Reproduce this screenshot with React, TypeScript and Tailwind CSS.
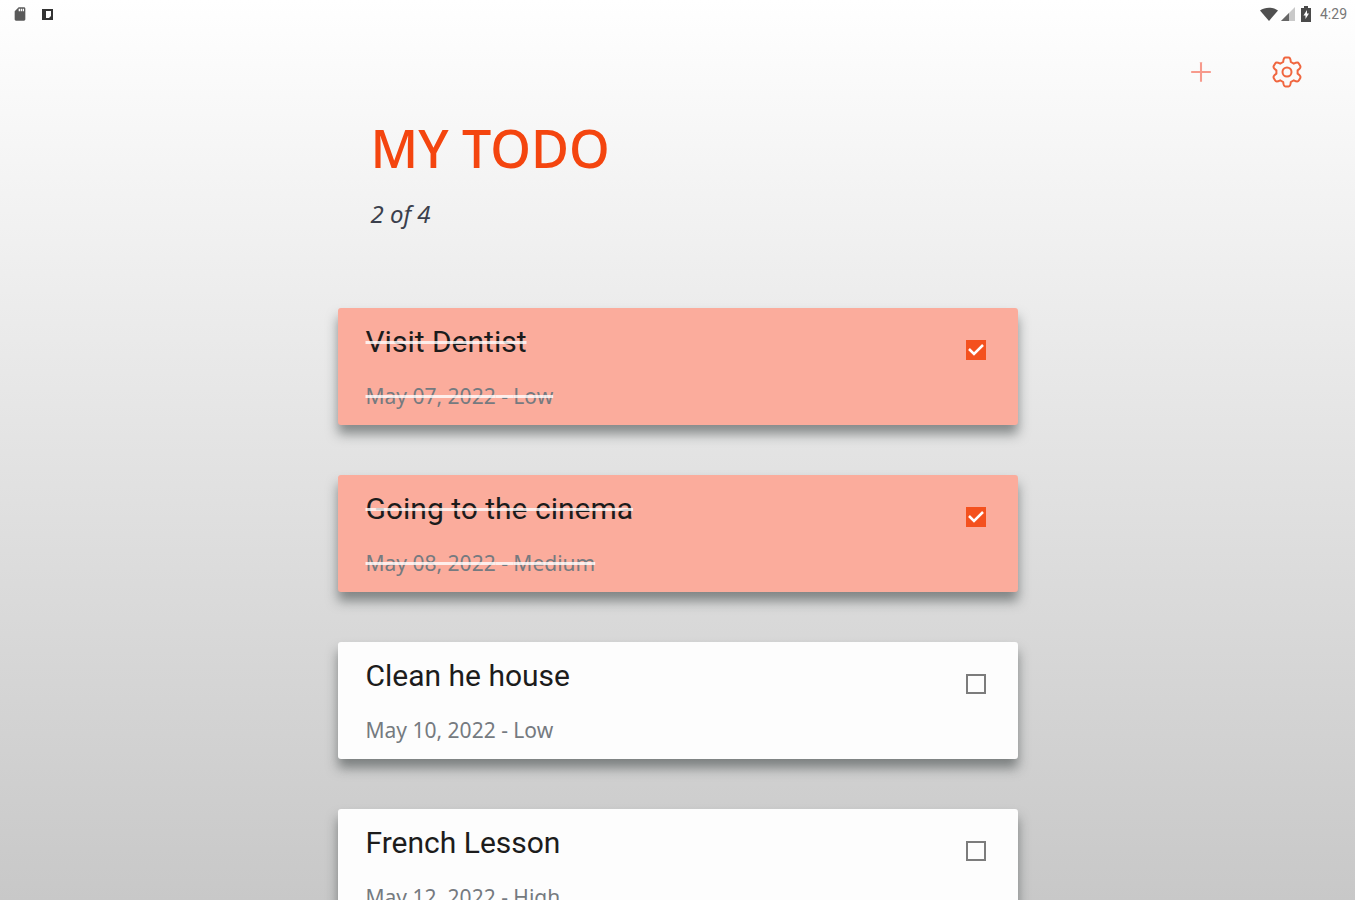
import { useState } from 'react';
import { AiOutlinePlus } from 'react-icons/ai';
import { MdSdCard } from 'react-icons/md';

interface Todo {
  id: number;
  title: string;
  date: string;
  priority: 'Low' | 'Medium' | 'High';
  done: boolean;
}

const initialTodos: Todo[] = [
  { id: 1, title: 'Visit Dentist', date: 'May 07, 2022', priority: 'Low', done: true },
  { id: 2, title: 'Going to the cinema', date: 'May 08, 2022', priority: 'Medium', done: true },
  { id: 3, title: 'Clean he house', date: 'May 10, 2022', priority: 'Low', done: false },
  { id: 4, title: 'French Lesson', date: 'May 12, 2022', priority: 'High', done: false },
];

function GearIcon() {
  return (
    <svg
      viewBox="-16 -16 32 32"
      className="size-8 text-[#f0663f]"
      fill="none"
      stroke="currentColor"
      strokeWidth="2"
      strokeLinejoin="round"
      aria-hidden="true"
    >
      <path d="M-3.8-10Q-3.500-14.500-1.500-14.500H1.500Q3.500-14.500 3.800-10L6.800-8.300Q10.800-10.300 11.800-8.600L13.300-6Q14.300-4.200 10.600-1.700V1.700Q14.300 4.200 13.300 6L11.800 8.600Q10.800 10.300 6.800 8.300L3.800 10Q3.500 14.500 1.500 14.500H-1.500Q-3.500 14.500-3.800 10L-6.800 8.300Q-10.800 10.300-11.800 8.600L-13.300 6Q-14.300 4.200-10.600 1.700V-1.700Q-14.300-4.200-13.300-6L-11.800-8.600Q-10.800-10.300-6.800-8.300Z" />
      <circle r="4.500" />
    </svg>
  );
}

function StatusBar() {
  return (
    <div className="flex h-7 shrink-0 items-center justify-between pr-2 pl-3 text-[#5a5a5a]">
      <div className="flex items-center gap-3.5">
        <MdSdCard className="size-4" />
        <svg viewBox="0 0 12 12" className="size-3 text-[#333]" aria-hidden="true">
          <path fill="currentColor" fillRule="evenodd" d="M0 1h11v11H0zM4 3v7h3l2-2V3z" />
        </svg>
      </div>
      <div className="flex items-center">
        <svg viewBox="0 0 18 14" className="h-3.5 w-[18px] text-[#505050]" aria-hidden="true">
          <path fill="currentColor" d="M0 3.5C5-.2 13-.2 18 3.5L9 14z" />
        </svg>
        <svg viewBox="0 0 16 16" className="ml-0.5 size-4" aria-hidden="true">
          <path fill="#c9c9c9" d="M15 1v14H1z" />
          <path fill="#666" d="M9 7v8H1z" />
        </svg>
        <svg viewBox="0 0 12 16" className="ml-1 h-4 w-3 text-[#4a4a4a]" aria-hidden="true">
          <path
            fill="currentColor"
            fillRule="evenodd"
            d="M4 0h4v2h3v14H1V2h3zM7 4 3.500 9.500H5.500V13L9 7.500H7z"
          />
        </svg>
        <span className="ml-2 font-[Roboto,sans-serif] text-sm text-[#777]">4:29</span>
      </div>
    </div>
  );
}

interface TodoCardProps {
  todo: Todo;
  onToggle: (id: number) => void;
}

function TodoCard({ todo, onToggle }: TodoCardProps) {
  const strike = todo.done ? 'line-through decoration-white/80 decoration-3' : '';

  return (
    <li>
      <label
        className={`flex h-[117px] justify-between rounded-[3px] pr-8 pl-7 shadow-[0_9px_12px_rgba(40,48,48,0.5)] ${
          todo.done ? 'bg-[#fbac9c]' : 'bg-[#fdfdfd]'
        }`}
      >
        <span className="flex flex-col gap-5 pt-4">
          <span className={`font-[Roboto,sans-serif] text-3xl leading-9 text-[#1c1c1c] ${strike}`}>
            {todo.title}
          </span>
          <span
            className={`font-['Noto_Sans',sans-serif] text-[21px] leading-8 text-[#757a80] ${strike}`}
          >
            {todo.date} - {todo.priority}
          </span>
        </span>
        <span className="mt-8 grid size-5 place-items-center">
          <input
            type="checkbox"
            checked={todo.done}
            onChange={() => onToggle(todo.id)}
            className="peer col-start-1 row-start-1 size-5 appearance-none border-2 border-[#7c7c7c] checked:border-[#f4511e] checked:bg-[#f4511e]"
          />
          <svg
            viewBox="0 0 20 20"
            className="pointer-events-none col-start-1 row-start-1 hidden size-5 peer-checked:block"
            aria-hidden="true"
          >
            <path d="M3 9l5 5L17 5" fill="none" stroke="#fff" strokeWidth="2.500" />
          </svg>
        </span>
      </label>
    </li>
  );
}

export default function App() {
  const [todos, setTodos] = useState(initialTodos);
  const doneCount = todos.filter((t) => t.done).length;

  const toggle = (id: number) => {
    setTodos((prev) => prev.map((t) => (t.id === id ? { ...t, done: !t.done } : t)));
  };

  return (
    <div className="flex h-screen flex-col overflow-hidden bg-linear-to-b from-white to-[#c8c8c8]">
      <StatusBar />
      <nav className="flex shrink-0 items-center justify-end gap-14 pt-7 pr-[52px]">
        <button type="button" aria-label="Add todo" className="cursor-pointer">
          <AiOutlinePlus className="size-7 text-[#f79a8c]" />
        </button>
        <button type="button" aria-label="Settings" className="cursor-pointer">
          <GearIcon />
        </button>
      </nav>
      <main className="mx-auto w-[680px] max-w-full">
        <header className="pt-5 pl-[33px] font-['Noto_Sans',sans-serif]">
          <h1 className="text-[52px] leading-20 font-medium text-[#f4450f]">MY TODO</h1>
          <p className="pt-1.5 text-2xl leading-10 text-[#3b3f4c] italic">
            {doneCount} of {todos.length}
          </p>
        </header>
        <ul className="flex flex-col gap-[50px] pt-[74px]">
          {todos.map((todo) => (
            <TodoCard key={todo.id} todo={todo} onToggle={toggle} />
          ))}
        </ul>
      </main>
    </div>
  );
}
